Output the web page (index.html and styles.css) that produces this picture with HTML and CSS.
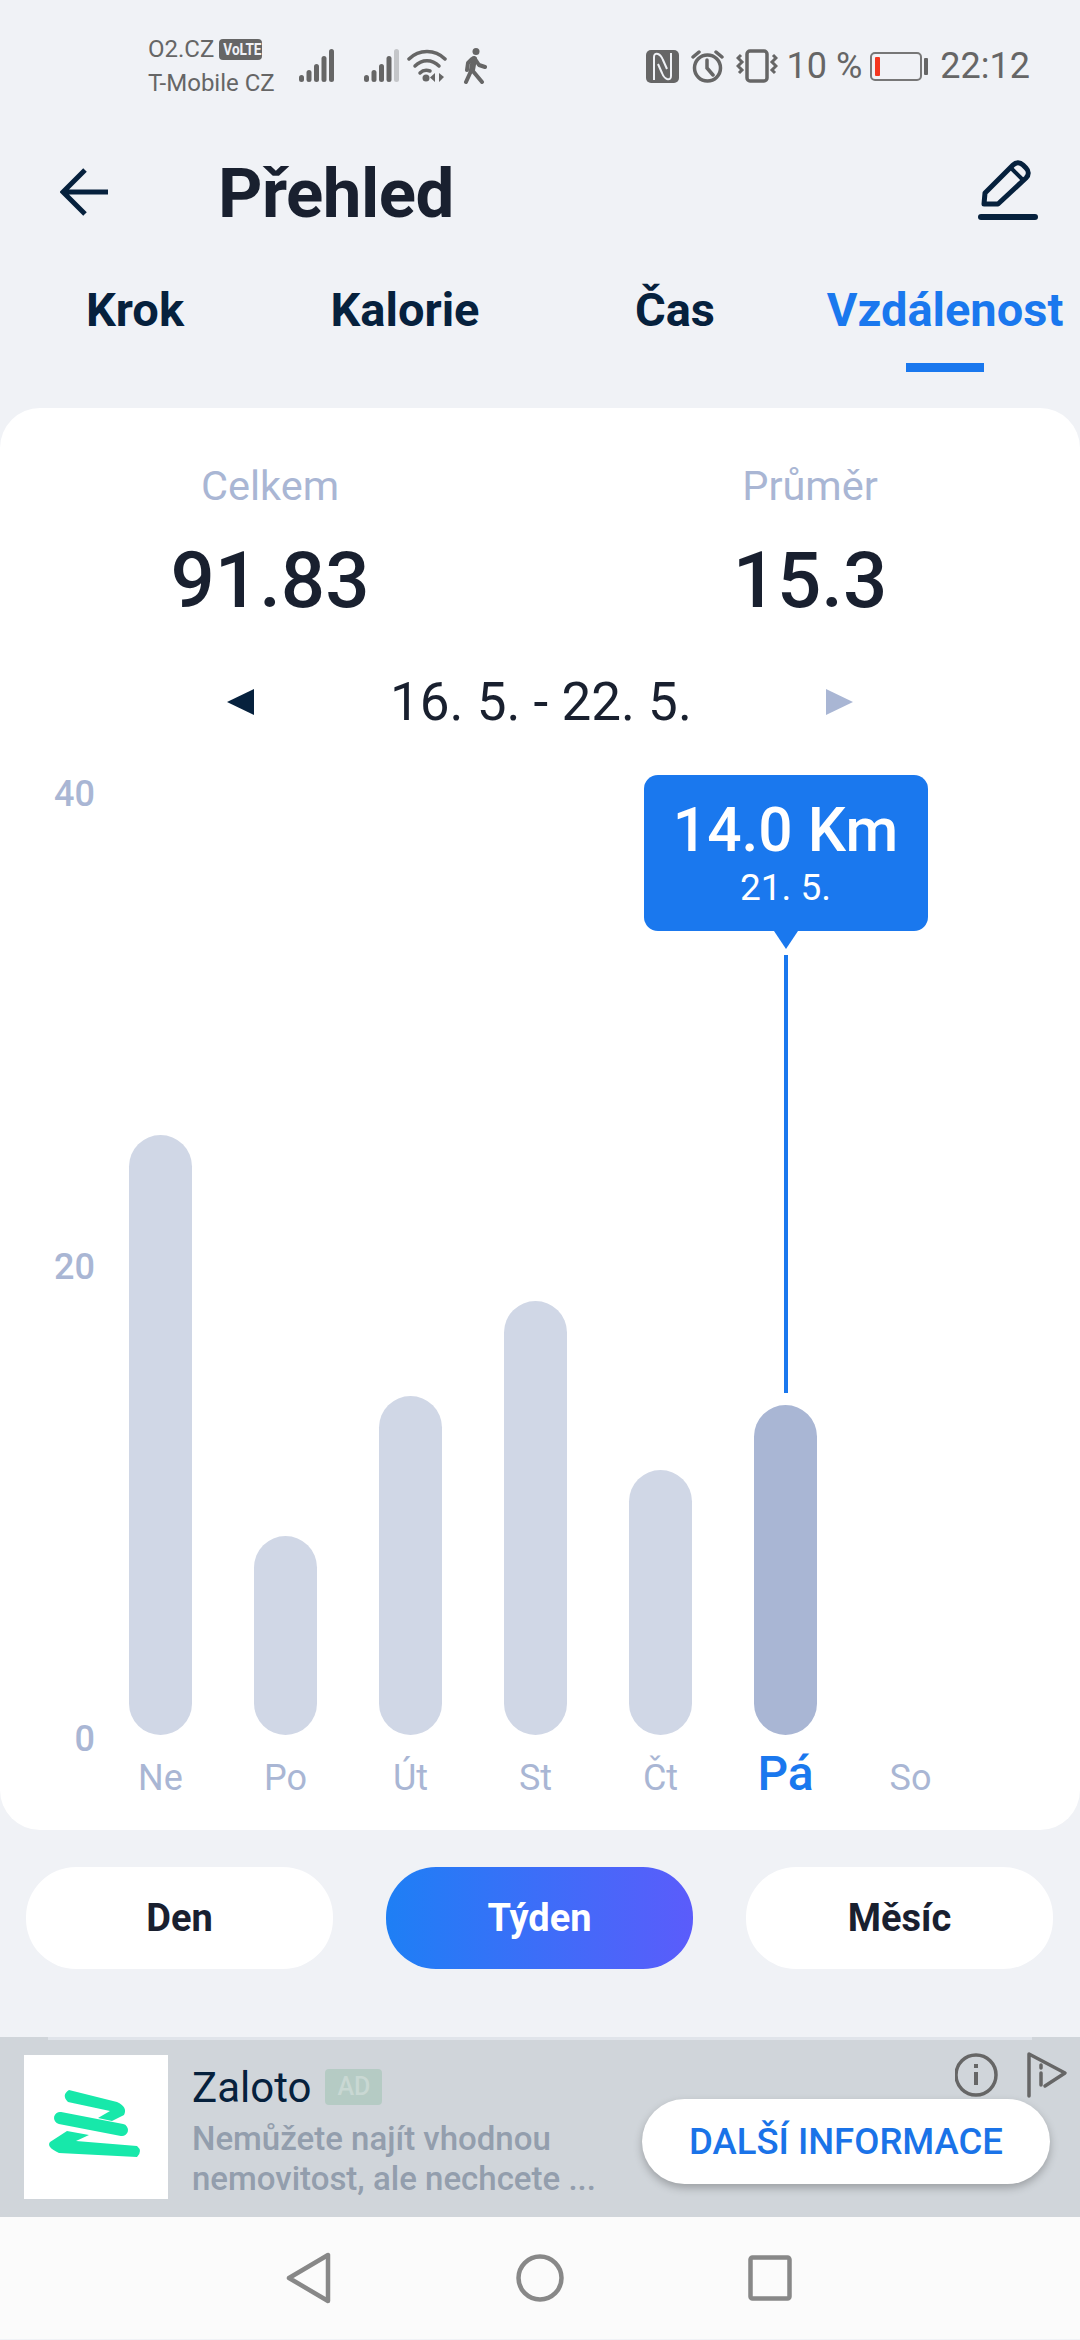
FILE: index.html
```html
<!DOCTYPE html>
<html lang="cs">
<head>
    <meta charset="UTF-8">
    <meta name="viewport" content="width=device-width, initial-scale=1.0">
    <title>Přehled</title>
    <link rel="stylesheet" href="styles.css">
</head>
<body>

<div class="status-bar">
    <div class="carriers">
        <div class="carrier-top">O2.CZ <span class="volte"><span>VoLTE</span></span></div>
        <div>T-Mobile CZ</div>
    </div>
    <svg width="35" height="34" viewBox="0 0 35 34" fill="#666">
        <rect x="0" y="26" width="5" height="7" rx="2.5"/>
        <rect x="7.500" y="21" width="5" height="12" rx="2.5"/>
        <rect x="15" y="15" width="5" height="18" rx="2.5"/>
        <rect x="22.500" y="7" width="5" height="26" rx="2.5"/>
        <rect x="30" y="0" width="5" height="33" rx="2.5"/>
    </svg>
    <svg class="signal-two" width="35" height="34" viewBox="0 0 35 34" fill="#666">
        <rect x="0" y="26" width="5" height="7" rx="2.5"/>
        <rect x="7.500" y="21" width="5" height="12" rx="2.5"/>
        <rect x="15" y="15" width="5" height="18" rx="2.5"/>
        <rect x="22.500" y="7" width="5" height="26" rx="2.5"/>
        <rect x="30" y="0" width="5" height="33" rx="2.5" fill="#c4c6c9"/>
    </svg>
    <svg class="wifi" width="40" height="34" viewBox="0 0 40 34" fill="none" stroke="#666" stroke-width="3.500" stroke-linecap="round">
        <path d="M2 10C12 0 28 0 38 10"/>
        <path d="M8 17C15 10 25 10 32 17"/>
        <path d="M13 24C16 21 20 21 23 22"/>
        <circle cx="19" cy="29" r="3.500" fill="#666" stroke="none"/>
        <path d="M28 24v9l-5-4.500zM32 24v9l5-5z" fill="#666" stroke="none"/>
    </svg>
    <svg class="walker" width="24" height="36" viewBox="0 0 24 36" fill="none" stroke="#666" stroke-width="4" stroke-linejoin="round" stroke-linecap="round">
        <circle cx="13" cy="3.500" r="3.500" fill="#666" stroke="none"/>
        <path d="M11 11l-2 11" stroke-width="6"/>
        <path d="M9 22l10 12M8 23L3 34M12 11l4 6 6 2M9 11l-4 4-1 7"/>
    </svg>
    <div class="status-right">
        <svg width="33" height="33" viewBox="0 0 33 33" fill="none" stroke="#f0f2f6" stroke-width="2">
            <rect width="33" height="33" rx="5" fill="#666" stroke="none"/>
            <path d="M8 30V7Q8 3 12 4 15 5 17 10L21 19"/>
            <path d="M25 3V26Q25 30 21 29 18 28 16 23L12 14"/>
        </svg>
        <svg width="33" height="34" viewBox="0 0 33 34" fill="none" stroke="#666" stroke-width="3.500">
            <circle cx="16.500" cy="19" r="13"/>
            <path d="M16 11v8l6 7M2 8l6-5M31 8l-6-5" stroke-linecap="round"/>
        </svg>
        <svg width="42" height="34" viewBox="0 0 42 34" fill="none" stroke="#666" stroke-width="3.500">
            <rect x="11" y="2" width="20" height="30" rx="3"/>
            <path d="M5 6L2 9l4 4-4 4 4 4-3 3M37 6l3 3-4 4 4 4-4 4 3 3" stroke-width="3"/>
        </svg>
        <span class="percent">10 %</span>
        <div class="battery">
            <div class="battery-body"><div class="battery-level"></div></div>
            <div class="battery-tip"></div>
        </div>
        <span class="clock">22:12</span>
    </div>
</div>

<div class="top-bar">
    <svg class="back-icon" width="50" height="50" viewBox="0 0 50 50" fill="none" stroke="#06213d" stroke-width="5">
        <path d="M48 24H3M25 2L3 24l22 22"/>
    </svg>
    <h1>Přehled</h1>
    <svg class="edit-icon" width="80" height="80" viewBox="0 0 80 80" fill="none" stroke="#06213d" stroke-width="5" stroke-linejoin="round">
        <path d="M15 43L43 15c3-3 7-3 10 0l3 3c3 3 3 7 0 10L28 54H14z"/>
        <path d="M41 18l12 12" stroke-width="4"/>
        <path d="M11 67h54" stroke-width="6" stroke-linecap="round"/>
    </svg>
</div>

<div class="tabs">
    <div class="tab">Krok</div>
    <div class="tab">Kalorie</div>
    <div class="tab">Čas</div>
    <div class="tab active">Vzdálenost</div>
</div>

<div class="card">
    <div class="totals">
        <div class="total">
            <p class="total-label">Celkem</p>
            <p class="total-value">91.83</p>
        </div>
        <div class="total">
            <p class="total-label">Průměr</p>
            <p class="total-value">15.3</p>
        </div>
    </div>

    <div class="date-row">
        <span class="arrow arrow-left"></span>
        <span class="date">16. 5. - 22. 5.</span>
        <span class="arrow arrow-right"></span>
    </div>

    <div class="chart">
        <div class="y-axis">
            <span>40</span>
            <span>20</span>
            <span>0</span>
        </div>
        <div class="bars">
            <div class="bar-col"><div class="bar" style="height: 600px"></div></div>
            <div class="bar-col"><div class="bar" style="height: 199px"></div></div>
            <div class="bar-col"><div class="bar" style="height: 339px"></div></div>
            <div class="bar-col"><div class="bar" style="height: 434px"></div></div>
            <div class="bar-col"><div class="bar" style="height: 265px"></div></div>
            <div class="bar-col">
                <div class="bar bar-selected" style="height: 330px">
                    <div class="guide"></div>
                    <div class="tooltip">
                        <div class="tooltip-value">14.0 Km</div>
                        <div class="tooltip-date">21. 5.</div>
                    </div>
                </div>
            </div>
            <div class="bar-col"></div>
        </div>
    </div>

    <div class="days">
        <span>Ne</span>
        <span>Po</span>
        <span>Út</span>
        <span>St</span>
        <span>Čt</span>
        <span class="day-active">Pá</span>
        <span>So</span>
    </div>
</div>

<div class="ranges">
    <div class="range">Den</div>
    <div class="range active">Týden</div>
    <div class="range">Měsíc</div>
</div>

<div class="ad">
    <div class="ad-line"></div>
    <div class="ad-logo">
        <svg width="144" height="144" viewBox="0 0 144 144" fill="#17E8AA">
            <path d="M45 35L93 47Q104 52 100 60L88 66 74 63 86 56 44 47Q37 40 45 35Z"/>
            <path d="M36 63L98 75" fill="none" stroke="#17E8AA" stroke-width="12" stroke-linecap="round"/>
            <path d="M43 76L65 80 52 86 113 91Q119 96 113 102L35 98Q22 92 26 87Z"/>
        </svg>
    </div>
    <div class="ad-text">
        <div class="ad-title">Zaloto <span class="ad-badge">AD</span></div>
        <p class="ad-desc">Nemůžete najít vhodnou<br>nemovitost, ale nechcete ...</p>
    </div>
    <div class="ad-icons">
        <svg width="44" height="46" viewBox="0 0 44 46" fill="none" stroke="#666" stroke-width="3.500">
            <circle cx="21" cy="23" r="20"/>
            <path d="M21 20v13M21 12v4" stroke-width="4"/>
        </svg>
        <svg width="42" height="46" viewBox="0 0 42 46" fill="none" stroke="#666" stroke-width="3.500" stroke-linejoin="round" stroke-linecap="round">
            <path d="M3 44V2l36 19-20 13"/>
            <path d="M15 21v12M15 13v3"/>
        </svg>
    </div>
    <div class="ad-button">DALŠÍ INFORMACE</div>
</div>

<div class="nav-bar">
    <svg width="46" height="52" viewBox="0 0 46 52" fill="none" stroke="#888" stroke-width="4.500" stroke-linejoin="round">
        <path d="M42 3v46L3 26z"/>
    </svg>
    <svg width="48" height="48" viewBox="0 0 48 48" fill="none" stroke="#888" stroke-width="4.500">
        <circle cx="24" cy="24" r="21.500"/>
    </svg>
    <svg width="44" height="46" viewBox="0 0 44 46" fill="none" stroke="#888" stroke-width="4.500" stroke-linejoin="round">
        <rect x="2.500" y="2.500" width="39" height="41" rx="2"/>
    </svg>
</div>

</body>
</html>
```

FILE: styles.css
```css
* {
    box-sizing: border-box;
}

body {
    font-family: 'Roboto', sans-serif;
    margin: 0;
    padding: 0;
    width: 1080px;
    height: 2340px;
    overflow: hidden;
    background-color: #F0F2F6;
    color: #19202F;
}

p, h1 {
    margin: 0;
}

/* Status bar */
.status-bar {
    display: flex;
    align-items: center;
    height: 130px;
    padding: 2px 50px 0 148px;
    color: #666;
}

.carriers {
    width: 151px;
    font-size: 24px;
    line-height: 34px;
    white-space: nowrap;
}

.carrier-top {
    display: flex;
    align-items: center;
    gap: 5px;
}

.volte {
    display: inline-block;
    width: 43px;
    height: 21px;
    background-color: #666;
    color: #F0F2F6;
    border-radius: 4px;
    overflow: hidden;
    text-align: center;
}

.volte span {
    display: block;
    font-size: 17px;
    font-weight: 700;
    line-height: 21px;
    transform: scaleX(0.8);
}

.signal-two {
    margin-left: 30px;
}

.wifi {
    margin-left: 8px;
}

.walker {
    margin-left: 16px;
}

.status-right {
    display: flex;
    align-items: center;
    margin-left: auto;
    gap: 12px;
}

.percent {
    font-size: 36px;
    margin: 0 -4px 0 -3px;
    white-space: nowrap;
}

.battery {
    display: flex;
    align-items: center;
    gap: 2px;
}

.battery-body {
    width: 52px;
    height: 29px;
    border: 2px solid #777;
    border-radius: 5px;
    padding: 3px;
}

.battery-level {
    width: 5px;
    height: 100%;
    background-color: #F5361F;
    border-radius: 1px;
}

.battery-tip {
    width: 4px;
    height: 17px;
    background-color: #666;
    border-radius: 1px;
}

.clock {
    font-size: 36px;
}

/* Header */
.top-bar {
    display: flex;
    align-items: center;
    height: 126px;
    padding: 0 30px 0 60px;
}

.back-icon {
    margin-right: 108px;
}

h1 {
    font-size: 69px;
    font-weight: 700;
    letter-spacing: -0.5px;
}

.edit-icon {
    margin-left: auto;
    margin-top: -6px;
}

/* Tabs */
.tabs {
    display: grid;
    grid-template-columns: repeat(4, 270px);
    height: 152px;
}

.tab {
    text-align: center;
    font-size: 47px;
    font-weight: 700;
    color: #06213D;
    line-height: 70px;
    padding-top: 19px;
    white-space: nowrap;
}

.tab.active {
    color: #1A78EE;
}

.tab.active::after {
    content: "";
    display: block;
    width: 78px;
    height: 9px;
    margin: 18px auto 0;
    background-color: #1A78EE;
}

/* Card */
.card {
    background-color: #fff;
    border-radius: 40px;
    height: 1422px;
    padding-top: 50px;
}

.totals {
    display: grid;
    grid-template-columns: 1fr 1fr;
    text-align: center;
}

.total-label {
    font-size: 41.5px;
    line-height: 56px;
    color: #A9B6D4;
}

.total-value {
    font-size: 78px;
    font-weight: 500;
    line-height: 100px;
    margin-top: 17px;
    color: #19202F;
}

.date-row {
    display: flex;
    justify-content: center;
    align-items: center;
    margin-top: 36px;
    height: 70px;
}

.date {
    font-size: 53px;
    width: 300px;
    margin: 0 136px;
    text-align: center;
    white-space: nowrap;
}

.arrow {
    width: 0;
    height: 0;
    border-top: 13px solid transparent;
    border-bottom: 13px solid transparent;
}

.arrow-left {
    border-right: 27px solid #06213D;
}

.arrow-right {
    border-left: 27px solid #A9B6D4;
}

.chart {
    display: flex;
    align-items: flex-end;
    height: 998px;
}

.y-axis {
    display: flex;
    flex-direction: column;
    justify-content: space-between;
    align-items: flex-end;
    width: 98px;
    height: 985px;
    margin-bottom: -22px;
    padding-right: 3px;
    font-size: 36px;
    font-weight: 500;
    line-height: 40px;
    color: #A9B6D4;
    position: relative;
    top: 2px;
}

.bars {
    display: grid;
    grid-template-columns: repeat(7, 125px);
    align-items: end;
}

.bar-col {
    display: flex;
    justify-content: center;
}

.bar {
    width: 63px;
    border-radius: 32px;
    background-color: #D0D7E6;
}

.bar-selected {
    background-color: #A9B6D4;
    position: relative;
}

.guide {
    position: absolute;
    left: 30px;
    bottom: 342px;
    width: 4px;
    height: 438px;
    background-color: #1A78EE;
}

.tooltip {
    position: absolute;
    left: 50%;
    bottom: 804px;
    width: 284px;
    height: 156px;
    margin-left: -142px;
    border-radius: 14px;
    background-color: #1A78EE;
    color: #fff;
    text-align: center;
    padding-top: 21px;
}

.tooltip::after {
    content: "";
    position: absolute;
    left: 130px;
    top: 156px;
    border-left: 12px solid transparent;
    border-right: 12px solid transparent;
    border-top: 18px solid #1A78EE;
}

.tooltip-value {
    font-size: 60.5px;
    font-weight: 500;
    line-height: 70px;
}

.tooltip-date {
    font-size: 37px;
    line-height: 44px;
}

.days {
    display: grid;
    grid-template-columns: repeat(7, 125px);
    align-items: baseline;
    padding-left: 98px;
    margin-top: 10px;
    font-size: 36px;
    color: #A9B6D4;
    text-align: center;
}

.day-active {
    font-size: 48px;
    font-weight: 500;
    color: #1A78EE;
}

/* Range buttons */
.ranges {
    display: flex;
    justify-content: space-between;
    padding: 37px 27px 0 26px;
    height: 207px;
}

.range {
    width: 307px;
    height: 102px;
    line-height: 102px;
    border-radius: 50px;
    background-color: #fff;
    text-align: center;
    font-size: 38px;
    font-weight: 700;
}

.range.active {
    background: linear-gradient(90deg, #1E7FF5, #5B5CFB);
    color: #fff;
}

/* Ad */
.ad {
    display: flex;
    height: 180px;
    background-color: #D0D5DA;
    padding: 18px 0 0 24px;
    position: relative;
}

.ad-line {
    position: absolute;
    left: 48px;
    right: 48px;
    top: 0;
    height: 3px;
    background-color: #E0E4EA;
}

.ad-logo {
    width: 144px;
    height: 144px;
    background-color: #fff;
}

.ad-logo svg {
    display: block;
}

.ad-text {
    margin-left: 24px;
}

.ad-title {
    display: flex;
    align-items: center;
    gap: 14px;
    height: 64px;
    font-size: 42px;
    color: #06213D;
}

.ad-badge {
    width: 57px;
    height: 36px;
    line-height: 36px;
    text-align: center;
    border-radius: 4px;
    background-color: #B5CBC4;
    color: #C9D8D3;
    font-size: 25px;
    font-weight: 500;
}

.ad-desc {
    font-size: 33px;
    font-weight: 500;
    line-height: 40px;
    color: #939EAD;
    white-space: nowrap;
}

.ad-icons {
    position: absolute;
    left: 955px;
    top: 15px;
    display: flex;
    gap: 27px;
}

.ad-button {
    position: absolute;
    left: 642px;
    top: 62px;
    width: 408px;
    height: 85px;
    line-height: 85px;
    border-radius: 43px;
    background-color: #fff;
    box-shadow: 0 4px 8px rgba(0, 0, 0, 0.25);
    text-align: center;
    font-size: 36.5px;
    font-weight: 500;
    color: #1A73E8;
}

/* Navigation bar */
.nav-bar {
    display: flex;
    align-items: center;
    gap: 184px;
    height: 122px;
    padding-left: 286px;
    background-color: #FBFBFB;
}
```
